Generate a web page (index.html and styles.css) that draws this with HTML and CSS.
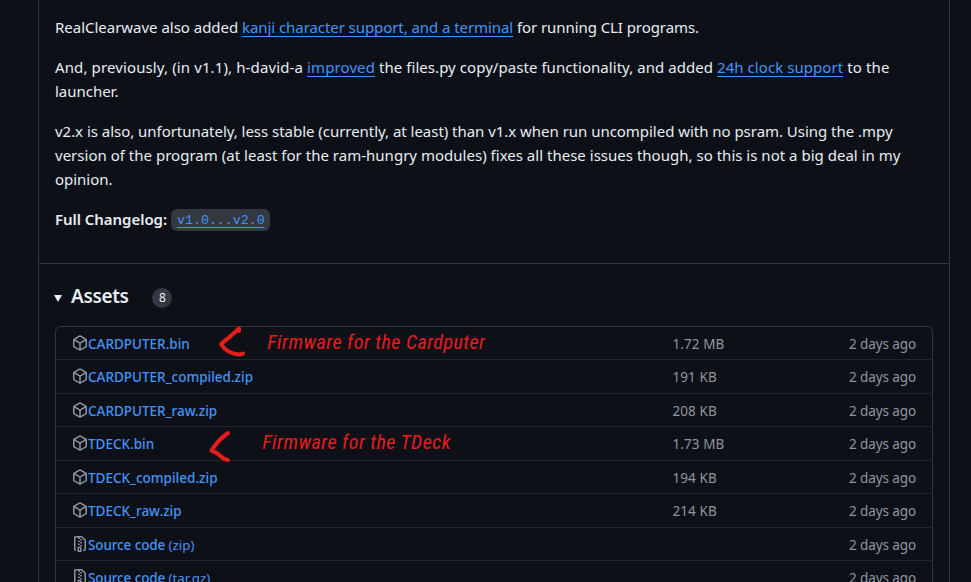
FILE: index.html
```
<!DOCTYPE html>
<html lang="en">
<head>
<meta charset="utf-8">
<title>Release</title>
<link rel="stylesheet" href="styles.css">
</head>
<body>
<svg class="defs" aria-hidden="true">
  <symbol id="package" viewBox="0 0 16 16"><path d="m8.878.392 5.25 3.045c.54.314.872.89.872 1.514v6.098a1.75 1.75 0 0 1-.872 1.514l-5.25 3.045a1.75 1.75 0 0 1-1.756 0l-5.25-3.045A1.75 1.75 0 0 1 1 11.049V4.951c0-.624.332-1.201.872-1.514L7.122.392a1.75 1.75 0 0 1 1.756 0ZM7.875 1.69l-4.63 2.685L8 7.133l4.755-2.758-4.63-2.685a.248.248 0 0 0-.25 0ZM2.5 5.677v5.372c0 .09.047.171.125.216l4.625 2.683V8.432Zm6.25 8.271 4.625-2.683a.25.25 0 0 0 .125-.216V5.677L8.75 8.432Z"/></symbol>
  <symbol id="zip" viewBox="0 0 16 16"><path d="M3.5 1.75v11.5c0 .09.048.173.126.217a.75.75 0 0 1-.752 1.298A1.748 1.748 0 0 1 2 13.25V1.75C2 .784 2.784 0 3.75 0h5.586c.464 0 .909.185 1.237.513l2.914 2.914c.329.328.513.773.513 1.237v8.586A1.75 1.75 0 0 1 12.25 15h-.5a.75.75 0 0 1 0-1.5h.5a.25.25 0 0 0 .25-.25V4.664a.25.25 0 0 0-.073-.177L9.513 1.573a.25.25 0 0 0-.177-.073H7.25a.75.75 0 0 1 0 1.5h-.5a.75.75 0 0 1 0-1.5h-3a.25.25 0 0 0-.25.25Zm3.75 8.75h.5c.966 0 1.75.784 1.75 1.75v3a.75.75 0 0 1-.75.75h-2.5a.75.75 0 0 1-.75-.75v-3c0-.966.784-1.75 1.75-1.75ZM6 5.25a.75.75 0 0 1 .75-.75h.5a.75.75 0 0 1 0 1.5h-.5A.75.75 0 0 1 6 5.25Zm.75 2.25h.5a.75.75 0 0 1 0 1.5h-.5a.75.75 0 0 1 0-1.5ZM8 6.75A.75.75 0 0 1 8.75 6h.5a.75.75 0 0 1 0 1.5h-.5A.75.75 0 0 1 8 6.75ZM8.75 3h.5a.75.75 0 0 1 0 1.5h-.5a.75.75 0 0 1 0-1.5ZM8 9.75A.75.75 0 0 1 8.75 9h.5a.75.75 0 0 1 0 1.5h-.5A.75.75 0 0 1 8 9.75Zm-1 2.5v2.25h1v-2.25a.25.25 0 0 0-.25-.25h-.5a.25.25 0 0 0-.25.25Z"/></symbol>
</svg>
<main class="release">
  <section class="notes">
    <p>RealClearwave also added <a class="t-kanji">kanji character support, and a terminal</a><span class="t-cli"> for running CLI programs.</span></p>
    <p><span class="t-prev">And, previously, (in v1.1), h-david-a </span><a class="t-prev">improved</a><span class="t-files"> the files.py copy/paste functionality, and added </span><a class="t-files">24h clock support</a><span class="t-to"> to the</span><br>launcher.</p>
    <p><span class="t-v2">v2.x is also, unfortunately, less stable (currently, at least) than v1.x when run uncompiled with no psram. Using the .mpy</span><br><span class="t-ver">version of the program (at least for the ram-hungry modules) fixes all these issues though, so this is not a big deal in my</span><br>opinion.</p>
    <p class="changelog"><strong>Full Changelog:</strong><code><a>v1.0...v2.0</a></code></p>
  </section>
  <section class="assets">
    <h3><span class="caret"></span><span class="label">Assets</span><span class="counter">8</span></h3>
    <ul>
      <li><svg><use href="#package"/></svg><a>CARDPUTER.bin</a><span class="size">1.72 MB</span><time>2 days ago</time></li>
      <li><svg><use href="#package"/></svg><a>CARDPUTER_compiled.zip</a><span class="size">191 KB</span><time>2 days ago</time></li>
      <li><svg><use href="#package"/></svg><a>CARDPUTER_raw.zip</a><span class="size">208 KB</span><time>2 days ago</time></li>
      <li><svg><use href="#package"/></svg><a>TDECK.bin</a><span class="size">1.73 MB</span><time>2 days ago</time></li>
      <li><svg><use href="#package"/></svg><a>TDECK_compiled.zip</a><span class="size">194 KB</span><time>2 days ago</time></li>
      <li><svg><use href="#package"/></svg><a>TDECK_raw.zip</a><span class="size">214 KB</span><time>2 days ago</time></li>
      <li><svg><use href="#zip"/></svg><a class="source">Source code <small>(zip)</small></a><span class="size"></span><time>2 days ago</time></li>
      <li><svg><use href="#zip"/></svg><a class="source">Source code <small>(tar.gz)</small></a><span class="size"></span><time>2 days ago</time></li>
    </ul>
  </section>
</main>
<svg class="marks" viewBox="0 0 971 582" aria-hidden="true">
  <path d="M239 331V328.500Q230 337 221 344Q227 354 240 354.500L243 353.500"/>
  <path d="M228 433Q218 440 211.500 450.500Q216 452 221 456.500Q224 459.500 228 460"/>
</svg>
<div class="note note-cardputer">Firmware for the Cardputer</div>
<div class="note note-tdeck">Firmware for the TDeck</div>
</body>
</html>
```
FILE: styles.css
```
* { box-sizing: border-box; }

body {
  margin: 0;
  height: 582px;
  overflow: hidden;
  position: relative;
  background: #0d1117;
  color: #e6edf3;
  font: 15px/24px "Noto Sans", sans-serif;
}

.defs { position: absolute; width: 0; height: 0; }

.release {
  width: 912px;
  height: 582px;
  overflow: hidden;
  margin-left: 38px;
  border: 1px solid #30363d;
  border-width: 0 1px;
}

.notes {
  height: 264px;
  padding: 15px 16px 0;
  border-bottom: 1px solid #30363d;
}
.notes p { margin: 0 0 16px; letter-spacing: -0.02px; white-space: pre; }
.notes a {
  color: #4493f8;
  text-decoration: underline 1px;
  text-underline-offset: 3px;
  text-decoration-skip-ink: none;
}
.notes .t-kanji, .notes .t-cli { letter-spacing: -0.073px; }
.notes .t-prev { letter-spacing: 0.118px; }
.notes .t-files { letter-spacing: 0.053px; }
.notes .t-to { letter-spacing: 0.15px; }
.notes .t-v2 { letter-spacing: -0.032px; }
.notes .t-ver { letter-spacing: 0.014px; }

.changelog { display: flex; align-items: center; }
.changelog strong { font-weight: 600; letter-spacing: -0.045px; }
.changelog code {
  height: 22px;
  margin: 1px 0 0 4px;
  padding: 0 5px 0 6px;
  border-radius: 6px;
  background: #343941;
  font: 13.3px/24px "Liberation Mono", monospace;
}

.assets { padding: 20px 16px 0; }
.assets h3 {
  display: flex;
  align-items: center;
  height: 26px;
  margin: 0 0 15.8px;
  font-size: 19px;
  font-weight: 600;
}
.caret {
  margin: 3px 9px 0 -1px;
  border: 4px solid transparent;
  border-top: 7px solid #e6edf3;
  border-bottom: 0;
}
.label { margin-top: -2px; letter-spacing: -0.37px; }
.counter {
  width: 20px;
  height: 20px;
  margin: 2px 0 0 24px;
  border-radius: 10px;
  background: #343941;
  font: 12px/20px "Noto Sans", sans-serif;
  text-align: center;
}

.assets ul {
  margin: 0;
  padding: 0;
  list-style: none;
  width: 878px;
  border: 1px solid #30363d;
  border-radius: 6px;
}
.assets li {
  display: flex;
  align-items: center;
  height: 33.5px;
  padding: 2px 16px 0;
  border-bottom: 1px solid #21262d;
  font-size: 13.5px;
  color: #8d96a0;
}
.assets li svg { width: 16px; height: 16px; margin-top: -3px; fill: #8d96a0; }
.assets li a {
  width: 584.5px;
  color: #4493f8;
  font-weight: 500;
}
.assets li:nth-child(even) :is(a, .size, time) { margin-top: -1px; }
.assets li .source { letter-spacing: -0.12px; }
.assets small { font-size: 13.3px; font-weight: 400; letter-spacing: 0; }
.size { width: 120px; letter-spacing: 0.08px; }
.assets time { margin-left: auto; letter-spacing: -0.1px; }

.marks { position: absolute; inset: 0; width: 971px; height: 582px; }
.marks path {
  fill: none;
  stroke: #e81c1c;
  stroke-width: 4;
  stroke-linecap: round;
  stroke-linejoin: round;
}
.note {
  position: absolute;
  color: #e81c1c;
  font: italic 20px/24px "Roboto Condensed", Roboto, sans-serif;
  letter-spacing: 0.47px;
  white-space: nowrap;
}
.note-cardputer { left: 267.3px; top: 330px; }
.note-tdeck { left: 262.3px; top: 430px; }
```
